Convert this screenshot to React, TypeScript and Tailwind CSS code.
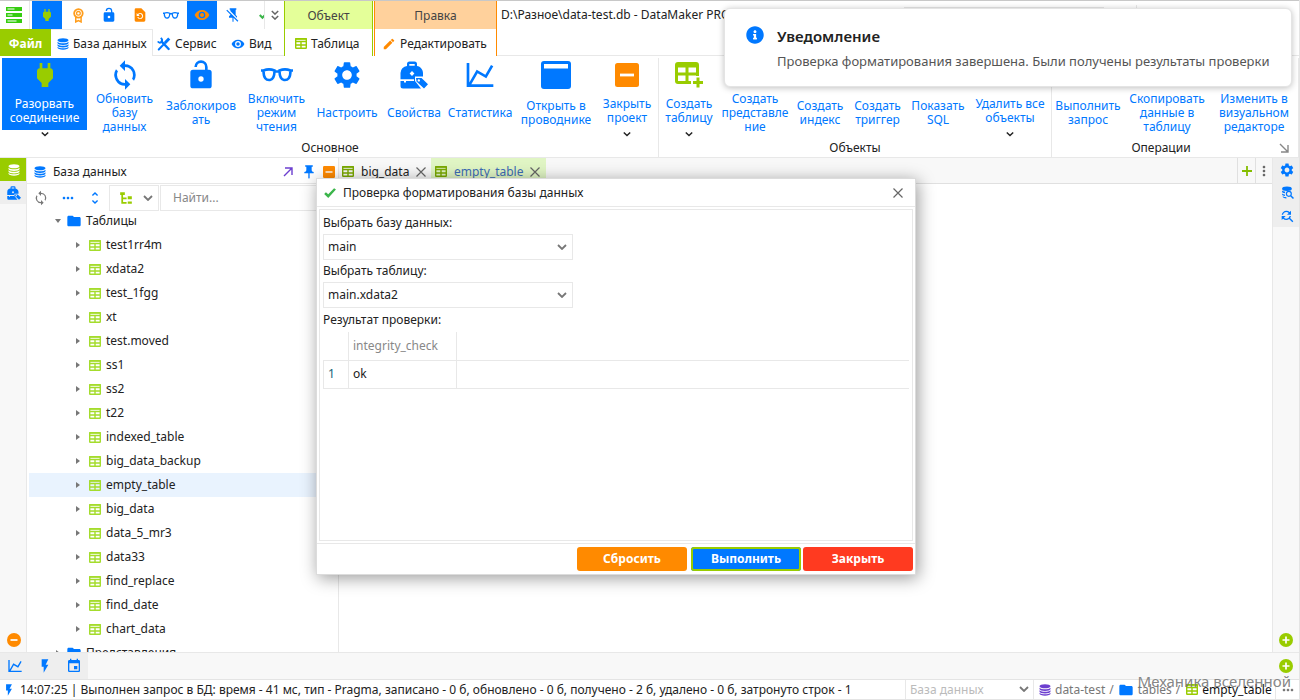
import type { ReactNode } from "react"
import clsx from "clsx"
import { FaInfoCircle } from "react-icons/fa"
import {
  MdEdit,
  MdEvent,
  MdFindReplace,
  MdFolder,
  MdMoreHoriz,
  MdMoreVert,
  MdPushPin,
  MdSettings,
  MdUnfoldMore,
} from "react-icons/md"

type IconProps = { className?: string }

const paths = {
  plug: "M16 7V3h-2v4h-4V3H8v4C7 7 6 8 6 9v5.5L9.5 18v3h5v-3l3.500-3.500V9c0-1-1-2-2-2z",
  lock: "M18 8a2 2 0 0 1 2 2v10a2 2 0 0 1-2 2H6a2 2 0 0 1-2-2V10a2 2 0 0 1 2-2h9V6a3 3 0 0 0-6 0H7a5 5 0 0 1 10 0v2h1m-6 9a2 2 0 1 0 0-4 2 2 0 0 0 0 4z",
  sync: "M12 18a6 6 0 0 1-6-6c0-1 .25-1.970.700-2.800L5.240 7.740A8 8 0 0 0 12 20v3l4-4-4-4m0-11V1L8 5l4 4V6a6 6 0 0 1 6 6c0 1-.25 1.970-.700 2.800l1.460 1.460A8 8 0 0 0 12 4z",
  chart: "M16 11.780l4.240-7.330 1.730 1-5.230 9.050-6.510-3.750L5.460 19H22v2H2V3h2v14.540L9.500 8z",
  eye: "M12 9a3 3 0 1 0 0 6 3 3 0 0 0 0-6m0 8a5 5 0 1 1 0-10 5 5 0 0 1 0 10m0-12.500C7 4.500 2.730 7.610 1 12c1.730 4.390 6 7.500 11 7.500s9.270-3.110 11-7.500c-1.730-4.390-6-7.500-11-7.500z",
  flash: "M7 2v11h3v9l7-12h-4l4-8z",
  restore: "M14 2H6a2 2 0 0 0-2 2v16a2 2 0 0 0 2 2h12a2 2 0 0 0 2-2V8l-6-6m-2 16a4.500 4.500 0 0 1-4.200-3h1.700a3 3 0 1 0 .3-3.300L11.500 13.500H7V9l1.700 1.700A4.500 4.500 0 1 1 12 18z",
  pinOff: "M2 5.270L3.280 4 20 20.720 18.730 22l-5.930-5.930V22h-1.600v-6H6v-2l2-2v-.73l-6-6M16 12l2 2v2h-.180L8 6.180V4H7V2h10v2h-1v8z",
  check: "M9 20.400L2 13.500l3-3 4 3.800L19 4l3.200 2z",
  treeView: "M2 2h8v5H7v4h6v3H7v5h6v3H4V7H2V2m13 7h7v5h-7V9m0 9h7v4h-7v-4z",
}

function Icon({ name, className }: { name: keyof typeof paths } & IconProps) {
  return (
    <svg viewBox="0 0 24 24" fill="currentColor" fillRule="evenodd" className={clsx("shrink-0", className)} aria-hidden="true">
      <path d={paths[name]} />
    </svg>
  )
}

function DatabaseIcon({ className }: IconProps) {
  return (
    <svg viewBox="0 0 24 24" fill="currentColor" className={clsx("shrink-0", className)} aria-hidden="true">
      <ellipse cx="12" cy="4.500" rx="11" ry="4" />
      <path d="M1 7.500c2 2.300 6.500 3.200 11 3.200s9-.9 11-3.200v2.500c0 2.200-5 4-11 4S1 12.200 1 10z" />
      <path d="M1 12.500c2 2.300 6.500 3.200 11 3.200s9-.9 11-3.200V15c0 2.200-5 4-11 4S1 17.200 1 15z" />
      <path d="M1 17.500c2 2.300 6.500 3.200 11 3.200s9-.9 11-3.200v1.500c0 2.600-5 4.500-11 4.500S1 21.600 1 19z" />
    </svg>
  )
}

function DatabaseSearchIcon({ className }: IconProps) {
  return (
    <svg viewBox="0 0 24 24" fill="currentColor" className={className} aria-hidden="true">
      <ellipse cx="11" cy="5" rx="9" ry="4" />
      <path d="M2 8.500c1.500 1.500 3.500 2 6 2.300L7 13.500C4 13 2 12 2 10.500zM2 14c1.300 1 3 1.500 5 1.800l.6 2.600C4.500 18 2 17 2 15.500zM3 19c1.500 1 4 1.600 7 1.800V23c-4 0-7-1.500-7-4z" />
      <circle cx="14.500" cy="14.500" r="4.500" fill="none" stroke="currentColor" strokeWidth="2.200" />
      <path d="M18 18l5 5" stroke="currentColor" strokeWidth="2.800" />
    </svg>
  )
}

function TableIcon({ className }: IconProps) {
  return (
    <svg viewBox="0 0 12 11" fill="none" stroke="currentColor" strokeWidth="1.400" className={clsx("h-[11px] w-3 shrink-0", className)} aria-hidden="true">
      <rect x=".7" y=".7" width="10.600" height="9.600" rx=".5" />
      <path d="M0 1h12M0 3.500h12M0 7h12M6 3v8" />
    </svg>
  )
}

function TablePlusIcon({ className }: IconProps) {
  return (
    <svg viewBox="0 0 30 28" fill="none" stroke="currentColor" strokeWidth="3" className={className} aria-hidden="true">
      <path d="M17 21.500H4a1.500 1.500 0 0 1-1.500-1.500V4A1.500 1.500 0 0 1 4 2.500h18A1.500 1.500 0 0 1 23.500 4v11M2 5h22M2 13h22M13 5v17M24 16.500v10M19 21.500h10" />
    </svg>
  )
}

function GlassesIcon({ className }: IconProps) {
  return (
    <svg viewBox="0 0 32 14" fill="none" stroke="currentColor" strokeWidth="2.600" className={className} aria-hidden="true">
      <path d="M0 2.500h3M29 2.500h3M2.500 2.500c3-1.200 8-1.200 11 0 0 6-1 9-4.500 9.500-4 .5-6.500-2-6.500-9.500zM29.500 2.500c-3-1.200-8-1.200-11 0 0 6 1 9 4.500 9.500 4 .5 6.500-2 6.500-9.500zM13 3.500h6" />
    </svg>
  )
}

function ToolboxIcon({ className }: IconProps) {
  return (
    <svg viewBox="0 0 28 28" fill="currentColor" fillRule="evenodd" className={className} aria-hidden="true">
      <path d="M7 5V3a2.500 2.500 0 0 1 2.500-2.500h5A2.500 2.500 0 0 1 17 3v2c3.500.5 6 3.500 6 7v3.500h-8V19v1l6 7.500H3A2.500 2.500 0 0 1 .5 25v-5H4v1.500h2V20h8v-1.800H.5V12A7 7 0 0 1 7 5m2.300-.2h5.400V2.900H9.300v1.900M12 10l-2.400 2.500L12 15l2.400-2.500L12 10z" />
      <path d="M16 17h5.500l6.500 6.300-4 4.200-7.500-7L16 17m2.800 1.200a1.200 1.200 0 1 0 0 2.400 1.200 1.200 0 0 0 0-2.400z" />
    </svg>
  )
}

function ExplorerIcon({ className }: IconProps) {
  return (
    <svg viewBox="0 0 30 28" className={className} aria-hidden="true">
      <rect width="30" height="28" rx="3" fill="currentColor" />
      <path d="M3 3h24v4.500H3z" fill="#fff" />
    </svg>
  )
}

function MinusBoxIcon({ className }: IconProps) {
  return (
    <svg viewBox="0 0 24 24" className={clsx("shrink-0", className)} aria-hidden="true">
      <rect width="24" height="24" rx="2.500" fill="#ff8a00" />
      <path d="M5 12h14" stroke="#fff" strokeWidth="2.800" />
    </svg>
  )
}

function RoundIcon({ className, plus }: IconProps & { plus?: boolean }) {
  return (
    <svg viewBox="0 0 14 14" className={className} aria-hidden="true">
      <circle cx="7" cy="7" r="7" fill="currentColor" />
      <path d={plus ? "M3.500 7h7M7 3.500v7" : "M3.500 7h7"} stroke="#fff" strokeWidth="1.700" />
    </svg>
  )
}

function ToolsIcon({ className }: IconProps) {
  return (
    <svg viewBox="0 0 24 24" fill="none" stroke="currentColor" className={clsx("shrink-0", className)} aria-hidden="true">
      <path d="M8 8l12 12.500" strokeWidth="4" strokeLinecap="round" />
      <path d="M6.500 1.500c2.500 2 3 4.500 1 7s-5 1-6-1" strokeWidth="3.200" />
      <path d="M3 21.500L14 10" strokeWidth="3.400" strokeLinecap="round" />
      <path d="M14 10l7-7.500" strokeWidth="5" />
    </svg>
  )
}

function AwardIcon({ className }: IconProps) {
  return (
    <svg viewBox="0 0 24 28" fill="none" stroke="currentColor" className={className} aria-hidden="true">
      <circle cx="12" cy="10" r="8" strokeWidth="3.400" />
      <circle cx="12" cy="10" r="3.500" strokeWidth="2.400" />
      <path d="M7 17v9l5-2.500 5 2.500v-9" strokeWidth="2.800" />
    </svg>
  )
}

function Chevron({ className }: IconProps) {
  return (
    <svg viewBox="0 0 10 6" fill="none" stroke="currentColor" strokeWidth="1.800" className={clsx("shrink-0", className ?? "h-1.5 w-2.5")} aria-hidden="true">
      <path d="M1 1l4 4 4-4" />
    </svg>
  )
}

function Cross() {
  return (
    <svg viewBox="0 0 10 10" fill="none" stroke="#666" strokeWidth="1.200" className="size-2.5" aria-hidden="true">
      <path d="M.5.5l9 9m0-9l-9 9" />
    </svg>
  )
}

function Arrow() {
  return (
    <svg viewBox="0 0 10 10" fill="none" stroke="currentColor" strokeWidth="1.400" className="size-2.5" aria-hidden="true">
      <path d="M1 9l8-8M2 1h7v7" />
    </svg>
  )
}

type QuickButtonProps = { label: string; active?: boolean; children: ReactNode }

function QuickButton({ label, active, children }: QuickButtonProps) {
  return (
    <button aria-label={label} className={clsx("flex w-[30px] shrink-0 items-center justify-center", active && "bg-[#0078ff]")}>
      {children}
    </button>
  )
}

type Command = { label: string; width: string; icon?: ReactNode; menu?: boolean; active?: boolean }

const mainCommands: Command[] = [
  { label: "Разорвать соединение", width: "w-[85px]", icon: <Icon name="plug" className="size-8 text-[#9c0]" />, menu: true, active: true },
  { label: "Обновить\nбазу\nданных", width: "w-[75px]", icon: <Icon name="sync" className="size-8" /> },
  { label: "Заблокиров\nать", width: "w-[78px]", icon: <Icon name="lock" className="size-8" /> },
  { label: "Включить режим чтения", width: "w-[73px]", icon: <GlassesIcon className="w-8" /> },
  { label: "Настроить", width: "w-[68px]", icon: <MdSettings className="size-8" /> },
  { label: "Свойства", width: "w-[66px]", icon: <ToolboxIcon className="size-7" /> },
  { label: "Статистика", width: "w-[66px]", icon: <Icon name="chart" className="size-8" /> },
  { label: "Открыть в проводнике", width: "w-[86px]", icon: <ExplorerIcon className="h-7 w-[30px]" /> },
  { label: "Закрыть проект", width: "w-14", icon: <MinusBoxIcon className="size-6" />, menu: true },
]

const objectCommands: Command[] = [
  { label: "Создать таблицу", width: "w-[60px]", icon: <TablePlusIcon className="h-7 text-[#9c0]" />, menu: true },
  { label: "Создать\nпредставле\nние", width: "w-[72px]" },
  { label: "Создать индекс", width: "w-[58px]" },
  { label: "Создать триггер", width: "w-[57px]" },
  { label: "Показать SQL", width: "w-[64px]", icon: <ExplorerIcon className="h-7 w-5" /> },
  { label: "Удалить все объекты", width: "w-[80px]", menu: true },
]

const operationCommands: Command[] = [
  { label: "Выполнить запрос", width: "w-[72px]" },
  { label: "Скопировать данные в таблицу", width: "w-[86px]", icon: <ExplorerIcon className="h-7 w-5 text-[#9c0]" /> },
  { label: "Изменить в визуальном редакторе", width: "w-[88px]", icon: <MdEdit className="size-8 text-[#ff8a00]" /> },
]

function CommandButton({ label, width, icon, menu, active }: Command) {
  return (
    <button className={clsx("flex h-20 shrink-0 flex-col items-center", width)}>
      <span className={clsx("flex w-full flex-col items-center", active ? "bg-[#0078ff] text-white" : "text-[#0078ff]", menu ? "h-[72px]" : "h-[76px]")}>
        <span className="flex h-[34px] shrink-0 items-center">{icon}</span>
        <span className="flex flex-1 items-center px-px text-center leading-[14px] whitespace-pre-line">{label}</span>
      </span>
      {menu && <Chevron className="mt-px h-1.5 w-2 text-[#222]" />}
    </button>
  )
}

function CommandGroup({ title, commands, className }: { title: string; commands: Command[]; className?: string }) {
  return (
    <section className={clsx("flex shrink-0 flex-col border-r border-[#e8e8e8]", className)}>
      <div className="flex h-20">
        {commands.map((command) => (
          <CommandButton key={command.label} {...command} />
        ))}
      </div>
      <h2 className="text-center leading-[19px]">{title}</h2>
    </section>
  )
}

const tables = [
  "test1rr4m",
  "xdata2",
  "test_1fgg",
  "xt",
  "test.moved",
  "ss1",
  "ss2",
  "t22",
  "indexed_table",
  "big_data_backup",
  "empty_table",
  "big_data",
  "data_5_mr3",
  "data33",
  "find_replace",
  "find_date",
  "chart_data",
]

function Header() {
  return (
    <header className="flex h-14 shrink-0 border-t border-[#c8c8c8] bg-white">
      <div className="flex w-[284px] shrink-0 flex-col">
        <div className="flex h-7 gap-px">
          <div className="mr-px flex w-[30px] items-center border-r border-[#e8e8e8] pl-1.5">
            <svg viewBox="0 0 16 16" className="size-4" fill="none" aria-hidden="true">
              <path d="M0 2h16M0 8h16M0 14h16" stroke="#35cc10" strokeWidth="4" />
              <path d="M1.500 2h7M1.500 8h5M1.500 14h9" stroke="#fff" strokeWidth="1.200" />
            </svg>
          </div>
          <QuickButton label="Разорвать соединение" active><Icon name="plug" className="size-4 text-[#9c0]" /></QuickButton>
          <QuickButton label="Лицензия"><AwardIcon className="h-[15px] text-[#ff9d1c]" /></QuickButton>
          <QuickButton label="Заблокировать"><Icon name="lock" className="size-4 text-[#0078ff]" /></QuickButton>
          <QuickButton label="Восстановить"><Icon name="restore" className="size-4 text-[#ff8a00]" /></QuickButton>
          <QuickButton label="Режим чтения"><GlassesIcon className="w-4 text-[#0078ff]" /></QuickButton>
          <QuickButton label="Просмотр" active><Icon name="eye" className="size-4 text-[#ff8a00]" /></QuickButton>
          <QuickButton label="Открепить"><Icon name="pinOff" className="size-4 text-[#0078ff]" /></QuickButton>
          <div className="flex w-4 items-center justify-end overflow-hidden border-r border-[#e8e8e8] py-1">
            <div className="w-1.5 overflow-hidden"><Icon name="check" className="size-3 text-[#3bb54a]" /></div>
          </div>
          <button aria-label="Ещё" className="flex flex-1 flex-col items-center justify-center text-[#666]">
            <Chevron className="h-[5px] w-2" />
            <Chevron className="h-[5px] w-2" />
          </button>
        </div>
        <nav className="flex flex-1 items-stretch">
          <a href="#file" className="flex w-[51px] items-center justify-center bg-[#9c0] pt-0.5 font-bold text-white">Файл</a>
          <a href="#database" className="flex w-[102px] items-center gap-1 border-t border-r border-[#e8e8e8] pt-px pl-1.5 whitespace-nowrap">
            <DatabaseIcon className="size-3 text-[#0078ff]" />База данных
          </a>
          <a href="#service" className="flex w-[72px] items-center gap-1 border-b border-[#e8e8e8] pt-[3px] pl-1">
            <ToolsIcon className="size-3.5 text-[#0078ff]" />Сервис
          </a>
          <a href="#view" className="flex flex-1 items-center gap-1 border-b border-[#e8e8e8] pt-[3px] pl-1.5">
            <Icon name="eye" className="size-3.5 text-[#0078ff]" />Вид
          </a>
        </nav>
      </div>
      <div className="flex w-[89px] shrink-0 flex-col border-x border-[#9c0]">
        <div className="flex h-7 items-center justify-center bg-[#e4ff99] pt-0.5 text-[#444]">Объект</div>
        <a href="#table" className="flex flex-1 items-center gap-1 pt-0.5 pl-2.5"><TableIcon className="text-[#9c0]" />Таблица</a>
      </div>
      <div className="ml-px flex w-[123px] shrink-0 flex-col border-x border-[#ff8a00]">
        <div className="flex h-7 items-center justify-center bg-[#ffd19c] pt-0.5 text-[#444]">Правка</div>
        <a href="#edit" className="flex flex-1 items-center gap-1 pt-0.5 pl-[7px]"><MdEdit className="size-3.5 text-[#ff8a00]" />Редактировать</a>
      </div>
      <div className="flex flex-1 items-start border-b border-[#e8e8e8]">
        <h1 className="pl-1 leading-7 whitespace-nowrap">D:\Разное\data-test.db - DataMaker PRO</h1>
        <input aria-label="Поиск команд" className="mt-1.5 mr-8 ml-auto h-6 w-[200px] border border-[#e8e8e8]" />
        <div className="mt-1 mr-[162px] h-6 w-px bg-[#e8e8e8]" />
      </div>
    </header>
  )
}

function Explorer() {
  return (
    <aside className="flex w-[312px] shrink-0 flex-col border-r border-[#e8e8e8] bg-white">
      <div className="flex h-[26px] shrink-0 items-center border-b border-[#e8e8e8] pt-0.5 pr-[3px] pl-[7px]">
        <DatabaseIcon className="mr-[7px] size-3 text-[#0078ff]" />
        <h2 className="mr-auto">База данных</h2>
        <button aria-label="Развернуть" className="text-[#6c3fcf]"><Arrow /></button>
        <button aria-label="Закрепить" className="ml-2 text-[#0078ff]"><MdPushPin className="size-4" /></button>
        <button aria-label="Свернуть" className="ml-1.5"><MinusBoxIcon className="size-3" /></button>
      </div>
      <div className="mt-px flex h-[26px] shrink-0 items-stretch">
        <button aria-label="Обновить" className="w-7 pl-1.5 text-[#777]"><Icon name="sync" className="size-4" /></button>
        <button aria-label="Действия" className="flex w-[26px] items-center justify-center text-[#0078ff]"><MdMoreHoriz className="size-4" /></button>
        <button aria-label="Раскрыть все" className="flex w-7 items-center justify-center text-[#0078ff]"><MdUnfoldMore className="size-4" /></button>
        <button aria-label="Вид дерева" className="flex w-[50px] items-center justify-between border border-[#e8e8e8] px-[5px] pl-[9px]">
          <Icon name="treeView" className="size-3.5 text-[#9c0]" />
          <Chevron className="h-1.5 w-2.5 text-[#777]" />
        </button>
        <input aria-label="Найти" placeholder="Найти..." className="ml-px min-w-0 flex-1 border border-[#e8e8e8] px-3 placeholder:text-[#888]" />
      </div>
      <ul className="-mt-0.5 min-h-0 flex-1 overflow-hidden pl-0.5">
        <li className="flex h-6 items-center pl-[26px]">
          <span className="h-0 w-0 border-x-[3px] border-t-4 border-x-transparent border-t-[#777]" />
          <MdFolder className="mr-1 ml-[5px] size-4 text-[#0078ff]" />Таблицы
        </li>
        {tables.map((name) => (
          <li key={name} className={clsx("flex h-6 items-center pl-[47px]", name === "empty_table" && "bg-[#e9f3fe]")}>
            <span className="h-0 w-0 border-y-[3px] border-l-4 border-y-transparent border-l-[#777]" />
            <TableIcon className="mr-[5px] ml-[9px] text-[#a4dc2c]" />{name}
          </li>
        ))}
        <li className="flex h-6 items-center pl-[27px]">
          <span className="h-0 w-0 border-y-[3px] border-l-4 border-y-transparent border-l-[#777]" />
          <MdFolder className="mr-1 ml-1.5 size-4 text-[#0078ff]" />Представления
        </li>
      </ul>
    </aside>
  )
}

function EditorArea() {
  return (
    <main className="flex min-w-0 flex-1 flex-col bg-white">
      <div className="flex h-[26px] shrink-0 items-stretch border-b border-[#e0e0e0] bg-[#f8f8f8]">
        <div className="flex w-[92px] items-center gap-[7px] pt-0.5 pl-[3px]">
          <TableIcon className="text-[#7aa800]" />
          <button>big_data</button>
          <button aria-label="Закрыть big_data"><Cross /></button>
        </div>
        <div className="flex w-[115px] items-center gap-[7px] bg-[#e0f5c4] pt-0.5 pl-1">
          <TableIcon className="text-[#7aa800]" />
          <button className="text-[#3c6bb5]">empty_table</button>
          <button aria-label="Закрыть empty_table"><Cross /></button>
        </div>
        <button aria-label="Добавить" className="ml-auto flex w-[18px] items-center justify-center border-l border-[#e0e0e0] text-[#84bd00]">
          <svg viewBox="0 0 10 10" stroke="currentColor" strokeWidth="1.800" className="size-2.5" aria-hidden="true"><path d="M5 0v10M0 5h10" /></svg>
        </button>
        <button aria-label="Меню" className="flex w-[17px] items-center justify-center border-l border-[#e0e0e0] text-[#666]"><MdMoreVert className="size-4" /></button>
      </div>
    </main>
  )
}

type SelectFieldProps = { id: string; label: string; options: string[] }

function SelectField({ id, label, options }: SelectFieldProps) {
  return (
    <div className="flex flex-col">
      <label htmlFor={id} className="leading-[22px]">{label}</label>
      <div className="relative w-[250px]">
        <select id={id} className="h-[26px] w-full appearance-none border border-[#e8e8e8] px-1">
          {options.map((option) => (
            <option key={option}>{option}</option>
          ))}
        </select>
        <Chevron className="pointer-events-none absolute top-2.5 right-1.5 h-1.5 w-2.5 text-[#777]" />
      </div>
    </div>
  )
}

function IntegrityDialog() {
  return (
    <section role="dialog" aria-labelledby="dialog-title" className="absolute top-[178px] left-[316px] z-10 flex h-[397px] w-[600px] flex-col border border-[#dcdcdc] bg-white shadow-[2px_3px_16px_rgba(0,0,0,0.4)]">
      <div className="flex h-7 shrink-0 items-center border-b border-[#e8e8e8] pr-3 pl-1.5">
        <Icon name="check" className="mr-1.5 size-3.5 text-[#3bb54a]" />
        <h2 id="dialog-title">Проверка форматирования базы данных</h2>
        <button aria-label="Закрыть окно" className="ml-auto"><Cross /></button>
      </div>
      <div className="m-0.5 flex-1 border border-[#e8e8e8] px-[3px] pt-0.5">
        <SelectField id="database" label="Выбрать базу данных:" options={["main"]} />
        <SelectField id="table" label="Выбрать таблицу:" options={["main.xdata2"]} />
        <table className="w-full border-collapse text-left">
          <caption className="text-left leading-6">Результат проверки:</caption>
          <thead>
            <tr className="h-7 border-b border-[#e8e8e8]">
              <th className="w-[25px] border-r border-[#e8e8e8]" />
              <th className="w-[108px] border-r border-[#e8e8e8] px-1 font-normal text-[#888]">integrity_check</th>
              <th />
            </tr>
          </thead>
          <tbody>
            <tr className="h-7 border-b border-[#e8e8e8]">
              <td className="border border-[#e8e8e8] px-1 text-[#156478]">1</td>
              <td className="border-r border-[#e8e8e8] px-1">ok</td>
              <td />
            </tr>
          </tbody>
        </table>
      </div>
      <div className="flex h-[31px] shrink-0 items-start justify-end gap-0.5 border-t border-[#e8e8e8] pt-[3px] pr-0.5 font-bold text-white">
        <button className="mr-0.5 h-6 w-[110px] rounded-[3px] bg-[#ff8a00]">Сбросить</button>
        <button className="h-6 w-[110px] rounded-[3px] bg-[#0078ff] ring-2 ring-[#9c0] ring-inset">Выполнить</button>
        <button className="h-6 w-[110px] rounded-[3px] bg-[#ff3a20]">Закрыть</button>
      </div>
    </section>
  )
}

function Notification() {
  return (
    <div role="status" className="absolute top-2 right-[7px] z-20 flex h-[79px] w-[568px] gap-[13px] rounded-md border border-[#e4e4e4] bg-white pt-[17px] pl-[21px] shadow-[0_1px_6px_rgba(0,0,0,0.25)]">
      <FaInfoCircle className="size-[18px] text-[#0078ff]" />
      <div>
        <h2 className="text-[15px] leading-5 font-semibold text-[#222]">Уведомление</h2>
        <p className="mt-[5px] text-[13px] leading-5 whitespace-nowrap text-[#555]">
          Проверка форматирования завершена. Были получены результаты проверки
        </p>
      </div>
    </div>
  )
}

function StatusBar() {
  return (
    <footer className="flex h-[21px] shrink-0 items-stretch overflow-hidden border-y border-[#e4e4e4] bg-white whitespace-nowrap">
      <div className="flex min-w-0 flex-1 items-center gap-1 pl-0.5">
        <Icon name="flash" className="size-3.5 text-[#0078ff]" />
        14:07:25 | Выполнен запрос в БД: время - 41 мс, тип - Pragma, записано - 0 б, обновлено - 0 б, получено - 2 б, удалено - 0 б, затронуто строк - 1
      </div>
      <div className="relative w-[129px] border-x border-[#e8e8e8]">
        <select aria-label="База данных" className="block h-full w-full appearance-none px-1 text-[#bbb]">
          <option>База данных</option>
        </select>
        <Chevron className="pointer-events-none absolute top-1.5 right-1 h-1.5 w-2.5 text-[#777]" />
      </div>
      <nav className="flex w-[241px] items-center pl-[5px] text-[#777]">
        <DatabaseIcon className="mr-1 size-3 text-[#6c3fcf]" />
        <a href="#data-test">data-test</a>
        <span className="mx-1">/</span>
        <MdFolder className="mr-1 size-4 text-[#0078ff]" />
        <a href="#tables">tables</a>
        <span className="mx-1">/</span>
        <TableIcon className="mr-1 ml-0.5 text-[#9c0]" />
        <a href="#empty-table" className="text-[#111]">empty_table</a>
      </nav>
      <button aria-label="Ещё пути" className="flex w-6 items-center justify-center border-l border-[#e8e8e8] text-[#777]"><MdMoreHoriz className="size-4" /></button>
    </footer>
  )
}

export default function App() {
  return (
    <div className="relative flex h-screen flex-col overflow-hidden border-r border-[#e4e4e4] bg-white font-['Noto_Sans',sans-serif] text-[12px] text-[#222]">
      <Header />
      <div className="flex h-[102px] shrink-0 border-b border-[#e8e8e8] pt-0.5 pl-0.5">
        <CommandGroup title="Основное" commands={mainCommands} className="w-[657px]" />
        <CommandGroup title="Объекты" commands={objectCommands} className="w-[393px]" />
        <div className="relative min-w-0 flex-1">
          <CommandGroup title="Операции" commands={operationCommands} className="w-full pr-7" />
          <button aria-label="Параметры ленты" className="absolute right-2.5 bottom-1 rotate-90 text-[#888]"><Arrow /></button>
        </div>
      </div>
      <div className="flex min-h-0 flex-1">
        <div className="flex w-[27px] shrink-0 flex-col items-stretch border-r border-[#e8e8e8] bg-[#f8f8f8]">
          <button aria-label="Базы" className="flex h-[23px] items-center justify-center bg-[#9c0] pl-0.5 text-white"><DatabaseIcon className="size-3" /></button>
          <button aria-label="Инструменты" className="flex h-[23px] items-center justify-center bg-[#eee] pl-0.5 text-[#0078ff]"><ToolboxIcon className="size-3.5" /></button>
          <button aria-label="Убрать" className="mt-auto mb-[5px] flex justify-center pl-0.5 text-[#ff8a00]"><RoundIcon className="size-3.5" /></button>
        </div>
        <Explorer />
        <EditorArea />
        <div className="flex w-[27px] shrink-0 flex-col border-l border-[#e8e8e8] bg-[#f8f8f8] text-[#0078ff]">
          <button aria-label="Настройки" className="flex h-[23px] items-center justify-center bg-[#eee] pl-0.5"><MdSettings className="size-4" /></button>
          <button aria-label="Поиск в базе" className="flex h-[23px] items-center justify-center bg-[#eee] pl-0.5"><DatabaseSearchIcon className="size-[13px]" /></button>
          <button aria-label="Найти и заменить" className="flex h-[23px] items-center justify-center bg-[#eee] pl-0.5"><MdFindReplace className="size-4" /></button>
          <button aria-label="Добавить панель" className="mt-auto mb-[5px] flex justify-center text-[#9c0]"><RoundIcon plus className="size-3.5" /></button>
        </div>
      </div>
      <div className="flex h-[27px] shrink-0 items-stretch border-t border-[#e8e8e8] bg-[#f8f8f8] text-[#0078ff]">
        <button aria-label="График" className="flex w-[30px] items-center justify-center bg-[#eee]"><Icon name="chart" className="size-4" /></button>
        <button aria-label="События" className="flex w-[29px] items-center justify-center bg-[#eee]"><Icon name="flash" className="size-4" /></button>
        <button aria-label="Календарь" className="flex w-[29px] items-center justify-center bg-[#eee]"><MdEvent className="size-4" /></button>
        <button aria-label="Добавить вкладку" className="mr-1.5 ml-auto text-[#9c0]"><RoundIcon plus className="size-3.5" /></button>
      </div>
      <StatusBar />
      <div className="pointer-events-none absolute right-2 bottom-[7px] text-[15px] leading-6 text-[#777]/90">Механика вселенной</div>
      <IntegrityDialog />
      <Notification />
    </div>
  )
}
